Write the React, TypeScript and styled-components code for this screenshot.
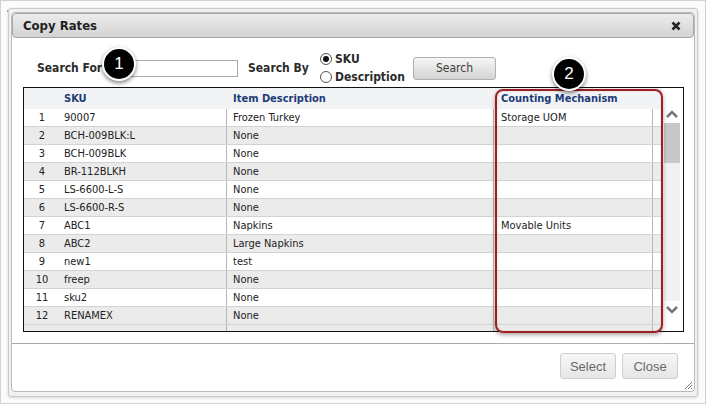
import styled, { createGlobalStyle } from 'styled-components';

const GlobalStyle = createGlobalStyle`
  html, body {
    margin: 0;
    padding: 0;
    background: #ffffff;
  }
  * {
    box-sizing: border-box;
  }
`;

const rows: [string, string, string][] = [
  ['90007', 'Frozen Turkey', 'Storage UOM'],
  ['BCH-009BLK:L', 'None', ''],
  ['BCH-009BLK', 'None', ''],
  ['BR-112BLKH', 'None', ''],
  ['LS-6600-L-S', 'None', ''],
  ['LS-6600-R-S', 'None', ''],
  ['ABC1', 'Napkins', 'Movable Units'],
  ['ABC2', 'Large Napkins', ''],
  ['new1', 'test', ''],
  ['freep', 'None', ''],
  ['sku2', 'None', ''],
  ['RENAMEX', 'None', ''],
];

export default function App() {
  return (
    <>
      <GlobalStyle />
      <Screen>
        <BackMarks />
        <DialogFrame>
          <Panel>
            <TitleBar>
              <span className='title'>Copy Rates</span>
              <CloseIcon viewBox='0 0 10 10'>
                <path d='M1.5 1.5 L8.5 8.5 M8.5 1.5 L1.5 8.5' />
              </CloseIcon>
            </TitleBar>

            <SearchRow>
              <Label>Search For</Label>
              <SearchInput />
              <Label $ml={10}>Search By</Label>
              <RadioGroup>
                <RadioItem>
                  <Radio $checked />
                  SKU
                </RadioItem>
                <RadioItem>
                  <Radio />
                  Description
                </RadioItem>
              </RadioGroup>
              <SearchBtn>Search</SearchBtn>
            </SearchRow>

            <TableBox>
              <Grid>
                <HeaderRow>
                  <Cell />
                  <Cell $pl={7}>SKU</Cell>
                  <Cell $pl={6}>Item Description</Cell>
                  <Cell $pl={7}>Counting Mechanism</Cell>
                  <Cell />
                </HeaderRow>
                {rows.map((r, i) => (
                  <Row key={i} $alt={i % 2 === 1}>
                    <NumCell>{i + 1}</NumCell>
                    <Cell $pl={7} $sep>{r[0]}</Cell>
                    <Cell $pl={6} $sep>{r[1]}</Cell>
                    <Cell $pl={7} $sep>{r[2]}</Cell>
                    <Cell />
                  </Row>
                ))}
                <Row $alt>
                  <NumCell />
                  <Cell $sep />
                  <Cell $sep />
                  <Cell $sep />
                  <Cell />
                </Row>
              </Grid>
              <ScrollBar>
                <Chevron viewBox='0 0 14 10'>
                  <polyline points='2,8 7,3 12,8' />
                </Chevron>
                <Track>
                  <Thumb />
                </Track>
                <Chevron viewBox='0 0 14 10'>
                  <polyline points='2,2 7,7 12,2' />
                </Chevron>
              </ScrollBar>
            </TableBox>

            <Footer>
              <FooterBtn>Select</FooterBtn>
              <FooterBtn>Close</FooterBtn>
            </Footer>
            <Grip viewBox='0 0 10 10'>
              <path d='M9 2 L2 9 M9 5 L5 9 M9 8 L8 9' />
            </Grip>
          </Panel>
        </DialogFrame>

        <Highlight />
        <Badge $x={101} $y={46}>1</Badge>
        <Badge $x={551} $y={56}>2</Badge>
      </Screen>
    </>
  );
}

const Screen = styled.div`
  position: relative;
  width: 706px;
  height: 404px;
  padding: 7px 0 0 7px;
  border: 1px solid #d2d2d2;
  background: #fbfbfb;
  overflow: hidden;
  font-family: 'DejaVu Sans Condensed', 'Liberation Sans', sans-serif;
  font-size: 11px;
  color: #222222;
`;

const BackMarks = styled.div`
  position: absolute;
  left: 6px;
  top: 9px;
  width: 24px;
  height: 8px;
  border-top: 2px dotted #d24a4a;
  opacity: 0.6;
`;

const DialogFrame = styled.div`
  position: relative;
  width: 690px;
  height: 389px;
  padding: 3px 2px 4px 2px;
  border: 1px solid #c9c9c9;
  border-radius: 3px;
  background: #f1f1f1;
  box-shadow: 0 1px 3px rgba(0, 0, 0, 0.15);
`;

const Panel = styled.div`
  position: relative;
  display: flex;
  flex-direction: column;
  height: 100%;
  border: 1px solid #b9b9b9;
  border-radius: 4px;
  background: #ffffff;
`;

const TitleBar = styled.div`
  display: flex;
  align-items: center;
  justify-content: space-between;
  height: 25px;
  margin: 0;
  padding: 0 12px 0 10px;
  border: 1px solid #a8a8a8;
  border-radius: 4px;
  background: linear-gradient(#ececec, #d3d3d3);

  > .title {
    font-size: 13px;
    font-weight: 700;
    color: #222222;
  }
`;

const CloseIcon = styled.svg`
  width: 10px;
  height: 10px;
  stroke: #222222;
  stroke-width: 2.6;
  fill: none;
`;

const SearchRow = styled.div`
  display: flex;
  align-items: center;
  height: 34px;
  margin-top: 13px;
  padding-left: 25px;
`;

const Label = styled.div<{ $ml?: number }>`
  width: ${(p) => (p.$ml ? 72 : 93)}px;
  margin-left: ${(p) => p.$ml ?? 0}px;
  font-size: 12px;
  font-weight: 700;
  color: #2b2b2b;
`;

const SearchInput = styled.div`
  width: 108px;
  height: 17px;
  border: 1px solid #a9a9a9;
  background: #ffffff;
`;

const RadioGroup = styled.div`
  display: flex;
  flex-direction: column;
  gap: 4px;
  width: 93px;
`;

const RadioItem = styled.div`
  display: flex;
  align-items: center;
  gap: 3px;
  font-size: 12px;
  font-weight: 700;
  color: #2b2b2b;
  line-height: 14px;
`;

const Radio = styled.span<{ $checked?: boolean }>`
  position: relative;
  width: 12px;
  height: 12px;
  border: 1px solid #555555;
  border-radius: 50%;
  background: #ffffff;

  &::after {
    content: '';
    display: ${(p) => (p.$checked ? 'block' : 'none')};
    position: absolute;
    left: 2px;
    top: 2px;
    width: 6px;
    height: 6px;
    border-radius: 50%;
    background: #111111;
  }
`;

const SearchBtn = styled.div`
  display: flex;
  align-items: center;
  justify-content: center;
  width: 83px;
  height: 23px;
  border: 1px solid #b0b0b0;
  border-radius: 3px;
  background: linear-gradient(#f6f6f6, #d4d4d4);
  font-size: 12px;
  color: #3f3f3f;
`;

const TableBox = styled.div`
  display: flex;
  height: 245px;
  margin: 2px 10px 0 11px;
  border: 1px solid #111111;
  overflow: hidden;
`;

const Grid = styled.div`
  display: flex;
  flex-direction: column;
  width: 638px;
`;

const HeaderRow = styled.div`
  display: grid;
  grid-template-columns: 33px 170px 267px 159px 9px;
  height: 21px;
  flex-shrink: 0;
  align-items: center;
  background: #f2f3f5;
  font-weight: 700;
  color: #1c3b78;
`;

const Row = styled.div<{ $alt?: boolean }>`
  display: grid;
  grid-template-columns: 33px 170px 267px 159px 9px;
  height: 18px;
  flex-shrink: 0;
  background: ${(p) => (p.$alt ? '#ebebeb' : '#ffffff')};
  border-bottom: 1px solid #d3d3d3;
`;

const Cell = styled.div<{ $pl?: number; $sep?: boolean }>`
  display: flex;
  align-items: center;
  height: 100%;
  padding-left: ${(p) => p.$pl ?? 0}px;
  border-right: ${(p) => (p.$sep ? '1px solid #b8b8b8' : 'none')};
  white-space: nowrap;
  overflow: hidden;
`;

const NumCell = styled.div`
  display: flex;
  align-items: center;
  justify-content: center;
  height: 100%;
  padding-left: 3px;
`;

const ScrollBar = styled.div`
  display: flex;
  flex-direction: column;
  align-items: center;
  width: 20px;
  padding: 21px 0 16px 0;
`;

const Chevron = styled.svg`
  width: 14px;
  height: 10px;
  fill: none;
  stroke: #777777;
  stroke-width: 2.6;
`;

const Track = styled.div`
  flex: 1;
  width: 16px;
  margin: 4px 0 4px 0;
  background: #f1f1f1;
`;

const Thumb = styled.div`
  width: 16px;
  height: 40px;
  background: #c8c8c8;
`;

const Footer = styled.div`
  display: flex;
  justify-content: flex-end;
  gap: 6px;
  margin-top: 11px;
  padding: 9px 16px 0 0;
  border-top: 1px solid #aaaaaa;
`;

const FooterBtn = styled.div`
  display: flex;
  align-items: center;
  justify-content: center;
  width: 56px;
  height: 26px;
  border: 1px solid #cfcfcf;
  border-radius: 3px;
  background: linear-gradient(#f7f7f7, #e6e6e6);
  font-family: 'Liberation Sans', sans-serif;
  font-size: 13px;
  color: #6a6a6a;
`;

const Grip = styled.svg`
  position: absolute;
  right: 1px;
  bottom: 1px;
  width: 10px;
  height: 10px;
  stroke: #777777;
  stroke-width: 1;
  fill: none;
`;

const Highlight = styled.div`
  position: absolute;
  left: 494px;
  top: 88px;
  width: 168px;
  height: 244px;
  border: 2px solid #a01e22;
  border-radius: 8px;
  box-shadow: 0 2px 4px rgba(0, 0, 0, 0.35), inset 0 0 2px rgba(0, 0, 0, 0.15);
`;

const Badge = styled.div<{ $x: number; $y: number }>`
  position: absolute;
  left: ${(p) => p.$x}px;
  top: ${(p) => p.$y}px;
  display: flex;
  align-items: center;
  justify-content: center;
  width: 34px;
  height: 34px;
  border: 2px solid #ffffff;
  border-radius: 50%;
  background: #000000;
  box-shadow: 0 2px 4px rgba(0, 0, 0, 0.5);
  font-family: 'Liberation Sans', sans-serif;
  font-size: 17px;
  color: #ffffff;
`;
